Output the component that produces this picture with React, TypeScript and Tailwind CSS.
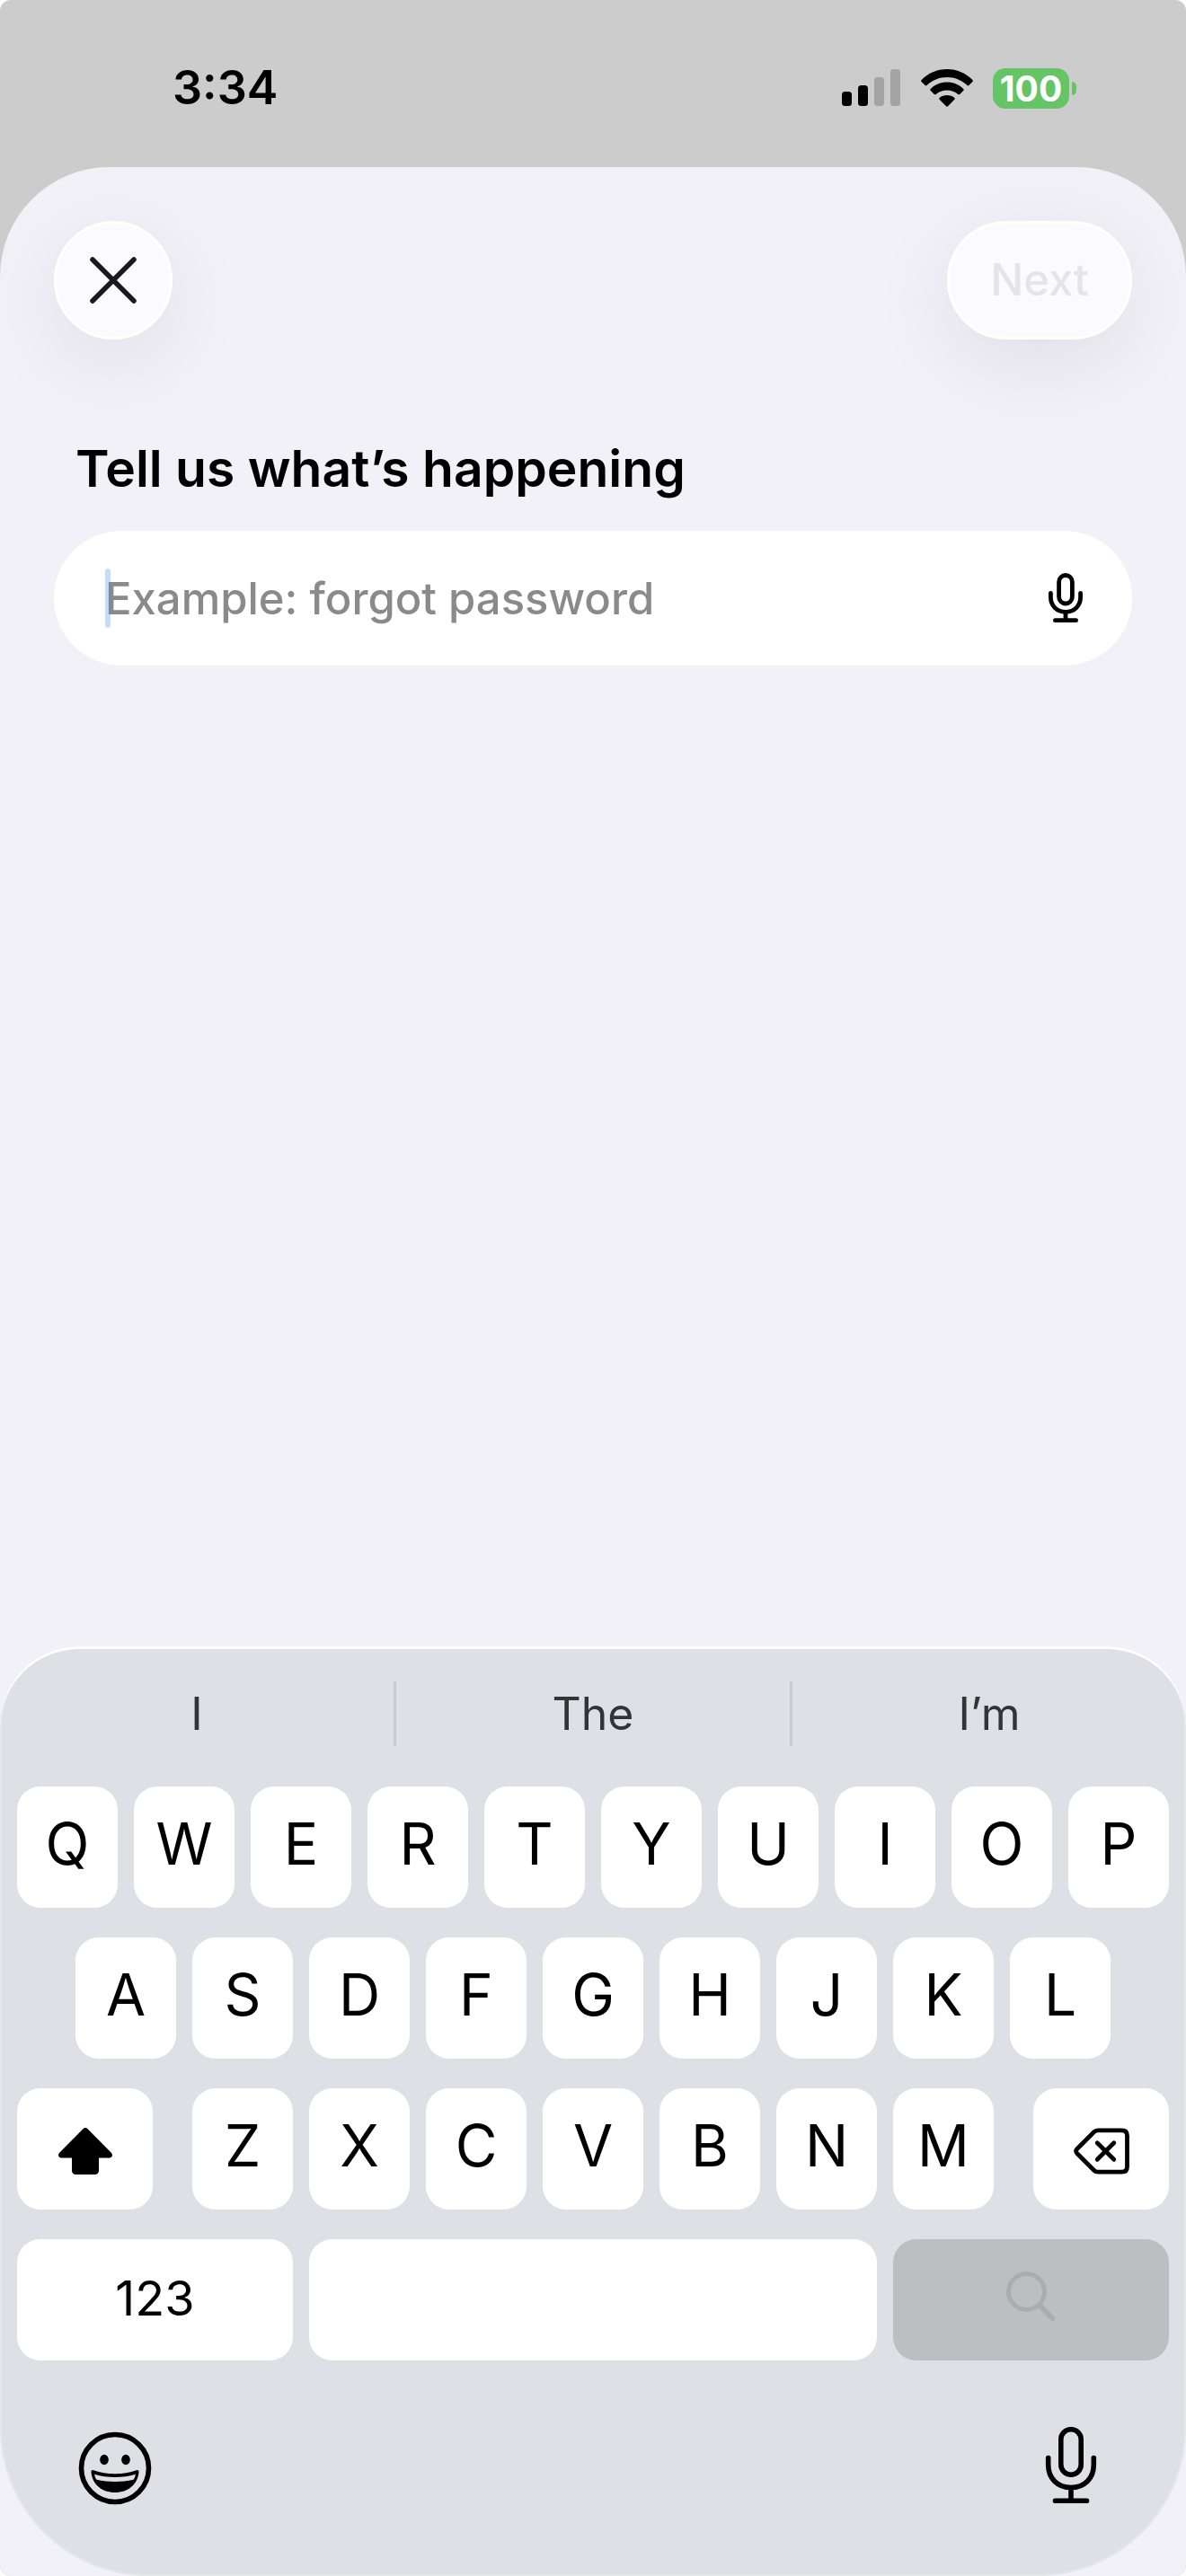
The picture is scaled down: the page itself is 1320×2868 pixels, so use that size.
import { useState } from 'react';
import type { ReactNode } from 'react';
import clsx from 'clsx';

const SUGGESTIONS = ['I', 'The', 'I’m'];
const TOP_ROW = ['Q', 'W', 'E', 'R', 'T', 'Y', 'U', 'I', 'O', 'P'];
const HOME_ROW = ['A', 'S', 'D', 'F', 'G', 'H', 'J', 'K', 'L'];
const BOTTOM_ROW = ['Z', 'X', 'C', 'V', 'B', 'N', 'M'];

function SignalIcon() {
	return (
		<svg className="h-[42px] w-[66px]" viewBox="0 0 66 42">
			<rect x="0" y="25" width="11" height="16" rx="3.5" />
			<rect x="18" y="18" width="11" height="23" rx="3.5" />
			<rect x="36" y="9" width="11" height="32" rx="3.5" fill="#a3a3a3" />
			<rect x="54" y="0" width="11" height="41" rx="3.5" fill="#a3a3a3" />
		</svg>
	);
}

function WifiIcon() {
	return (
		<svg className="h-[42px] w-[58px]" viewBox="0 0 58 42">
			<path d="M29 0C40 0 50 4.4 57.4 12c.6.6.6 1.3 0 1.9l-4 4.1c-.6.6-1.3.6-1.9 0C45.6 12.2 37.8 8.9 29 8.9S12.4 12.2 6.5 18c-.6.6-1.3.6-1.9 0l-4-4.1c-.6-.6-.6-1.3 0-1.9C8 4.4 18 0 29 0Z" />
			<path d="M29 14.6c7.1 0 13.5 2.7 18.3 7.3.6.6.6 1.3 0 1.9l-4.1 4.1c-.6.6-1.3.6-1.9.1C38 25 33.7 23.4 29 23.4S20 25 16.7 28c-.6.5-1.3.5-1.9-.1l-4.1-4.1c-.6-.6-.6-1.3 0-1.9C15.5 17.3 21.9 14.6 29 14.6Z" />
			<path d="M29 29c3.1 0 6 1 8.2 2.8.7.6.7 1.3.1 1.9l-7.3 7.5c-.6.6-1.4.6-2 0l-7.3-7.5c-.6-.6-.6-1.3.1-1.9C23 30 25.9 29 29 29Z" />
		</svg>
	);
}

function Battery() {
	return (
		<div className="flex items-center gap-[3px]">
			<div className="flex h-[45px] w-[85px] items-center justify-center rounded-[14px] bg-[#65c466] text-[39px] leading-none font-bold text-white">100</div>
			<div className="h-[15px] w-[5px] rounded-r-full bg-[#65c466]" />
		</div>
	);
}

function CloseIcon() {
	return (
		<svg className="size-[52px]" viewBox="0 0 52 52" fill="none" stroke="#1a1a1e" strokeWidth="5.5" strokeLinecap="round">
			<path d="M3 3l46 46M49 3L3 49" />
		</svg>
	);
}

function SmallMicIcon() {
	return (
		<svg className="h-[56px] w-[38px]" viewBox="0 0 38 56" fill="none" stroke="currentColor" strokeWidth="4.8" strokeLinecap="round">
			<rect x="11.6" y="2.5" width="14.8" height="31.5" rx="7.4" />
			<path d="M2.4 22.3v4.5c0 9.5 6.7 16.5 16.6 16.5s16.6-7 16.6-16.5v-4.5M19 43.3v9.2M7.4 52.7h23.2" />
		</svg>
	);
}

function MicIcon() {
	return (
		<svg className="h-[94px] w-[84px]" viewBox="0 -5 84 94" fill="none" stroke="currentColor" strokeWidth="5.6" strokeLinecap="round">
			<rect x="30.8" y="-1.2" width="22.4" height="50.4" rx="11.2" />
			<path d="M16.7 30.5v8c0 14.5 10.2 25 25.3 25s25.3-10.5 25.3-25v-8M42 63.5v14.5M24.5 78.2h35" />
		</svg>
	);
}

function ShiftIcon() {
	return (
		<svg className="h-[52px] w-[60px]" viewBox="0 0 60 52">
			<path d="M27.4 1.3c1.5-1.7 3.7-1.7 5.2 0l26.2 26.5c2.3 2.5 1.1 5.6-2.2 5.6H45v14.1c0 2.8-1.7 4.5-4.5 4.5h-21c-2.8 0-4.5-1.7-4.5-4.5V33.4H3.4c-3.3 0-4.5-3.1-2.2-5.6Z" />
		</svg>
	);
}

function DeleteIcon() {
	return (
		<svg className="h-[52px] w-[62px]" viewBox="0 0 62 52" fill="none" stroke="currentColor" strokeWidth="4.8" strokeLinecap="round" strokeLinejoin="round">
			<path d="M27 2.8h26.5c4 0 6 2 6 6v34.4c0 4-2 6-6 6H27c-1.8 0-3.2-.6-4.5-1.9L4 28.8c-1.9-1.9-1.9-3.7 0-5.6L22.5 4.7C23.8 3.4 25.2 2.8 27 2.8Z" />
			<path d="M26.2 16.7l18.6 18.6M44.8 16.7L26.2 35.3" />
		</svg>
	);
}

function SearchIcon() {
	return (
		<svg className="h-[56px] w-[55px]" viewBox="0 0 55 56" fill="none" stroke="currentColor" strokeLinecap="round">
			<circle cx="22.5" cy="22.5" r="20" strokeWidth="4.8" />
			<path d="M37.5 38L51.5 52.5" strokeWidth="5.8" />
		</svg>
	);
}

function EmojiIcon() {
	return (
		<svg className="size-[84px]" viewBox="0 0 84 84">
			<circle cx="42" cy="42" r="37.5" fill="none" stroke="currentColor" strokeWidth="5.6" />
			<ellipse cx="30" cy="32.5" rx="4.8" ry="5.8" />
			<ellipse cx="54" cy="32.5" rx="4.8" ry="5.8" />
			<path d="M18 44.2c7.5 2.8 15.5 4 24 4s16.5-1.2 24-4c1.7-.5 2.7.4 2.5 2.3C67.3 60 56.5 69 42 69S16.7 60 15.5 46.5c-.2-1.9.8-2.8 2.5-2.3Z" />
			<path d="M19.2 48.7C26.5 50.8 34 52 42 52s15.5-1.2 22.8-3.3c-.3 2.6-1 4.5-2.3 6C55.5 56.2 49 56.9 42 56.9s-13.5-.7-20.5-2.2c-1.3-1.5-2-3.4-2.3-6Z" fill="#dfe0e5" />
		</svg>
	);
}

function Key({ className = 'bg-white', label, children }: { className?: string; label?: string; children?: ReactNode }) {
	return (
		<button type="button" aria-label={label} className={clsx('flex h-[135px] items-center justify-center rounded-[26px]', className)}>
			{children}
		</button>
	);
}

function LetterKeys({ letters }: { letters: string[] }) {
	return letters.map((letter) => (
		<Key key={letter} className="min-w-0 flex-1 bg-white pb-2 text-[64px] leading-none">
			{letter}
		</Key>
	));
}

function StatusBar() {
	return (
		<div className="flex h-[186px] items-center justify-between pt-[10px] pr-[122px] pl-[192px]">
			<p className="text-[52px] leading-none font-semibold">3:34</p>
			<div className="flex items-center gap-[22px]">
				<SignalIcon />
				<WifiIcon />
				<Battery />
			</div>
		</div>
	);
}

function Keyboard() {
	return (
		<div className="rounded-t-[88px] rounded-b-[165px] bg-[#dfe0e5] pt-[3px] shadow-[inset_0_3px_0_#ffffff,inset_0_0_0_2px_#e5e6ea]">
			<div className="flex h-[144px] items-center">
				{SUGGESTIONS.map((word, i) => (
					<button key={word} type="button" className={clsx('h-[72px] flex-1 text-[50px] leading-none text-[#333338]', i > 0 && 'border-l-[3px] border-[#cbccd1]')}>
						{word}
					</button>
				))}
			</div>
			<div className="flex flex-col gap-[33px] px-[19px] pt-[9px]">
				<div className="flex gap-[18px]">
					<LetterKeys letters={TOP_ROW} />
				</div>
				<div className="flex gap-[18px] px-[65px]">
					<LetterKeys letters={HOME_ROW} />
				</div>
				<div className="flex gap-[44px]">
					<Key className="w-[151px] bg-white pt-1" label="Shift">
						<ShiftIcon />
					</Key>
					<div className="flex flex-1 gap-[18px]">
						<LetterKeys letters={BOTTOM_ROW} />
					</div>
					<Key className="w-[151px] bg-white pt-1" label="Delete">
						<DeleteIcon />
					</Key>
				</div>
				<div className="flex gap-[18px]">
					<Key className="w-[307px] bg-white pb-1 text-[54px] leading-none">123</Key>
					<Key className="flex-1 bg-white" label="Space" />
					<Key className="w-[307px] bg-[#bdbec2] pb-2 text-[#abacb0]" label="Search">
						<SearchIcon />
					</Key>
				</div>
			</div>
			<div className="flex h-[240px] items-center justify-between px-[86px]">
				<button type="button" aria-label="Emoji">
					<EmojiIcon />
				</button>
				<button type="button" aria-label="Dictation">
					<MicIcon />
				</button>
			</div>
		</div>
	);
}

export default function App() {
	const [issue, setIssue] = useState('');

	return (
		<div className="min-h-screen bg-white font-['Inter',sans-serif] text-black">
			<div className="flex min-h-screen flex-col overflow-hidden rounded-[12px] bg-[#cccccc]">
				<StatusBar />
				<main className="flex flex-1 flex-col rounded-t-[122px] bg-[#f2f1f7]">
					<div className="flex items-center justify-between px-[60px] pt-[60px]">
						<button type="button" aria-label="Close" className="flex size-[132px] items-center justify-center rounded-full border-[3px] border-white bg-[#fbfaff] shadow-[0_24px_100px_rgba(0,0,0,0.08)]">
							<CloseIcon />
						</button>
						<button type="button" disabled className="h-[132px] w-[206px] rounded-full border-[3px] border-white bg-[#fbfaff] text-[49px] font-medium text-[#e5e4e9] shadow-[0_24px_100px_rgba(0,0,0,0.08)]">
							Next
						</button>
					</div>
					<label htmlFor="issue" className="px-[84px] pt-[108px] text-[57px] leading-[72px] font-semibold">
						Tell us what’s happening
					</label>
					<div className="relative mx-[60px] mt-[33px] flex h-[150px] items-center rounded-full bg-white pr-[55px] pl-[57px]">
						<input id="issue" type="text" value={issue} onChange={(e) => setIssue(e.target.value)} placeholder="Example: forgot password" className="h-full min-w-0 flex-1 text-[49px] font-medium outline-none placeholder:text-[#8a8a8c] placeholder:opacity-100" />
						<span className="absolute top-[42px] left-[57px] h-[66px] w-[6px] rounded-full bg-[#3b8ff0]/30" />
						<button type="button" aria-label="Dictate">
							<SmallMicIcon />
						</button>
					</div>
					<div className="mt-auto">
						<Keyboard />
					</div>
				</main>
			</div>
		</div>
	);
}
